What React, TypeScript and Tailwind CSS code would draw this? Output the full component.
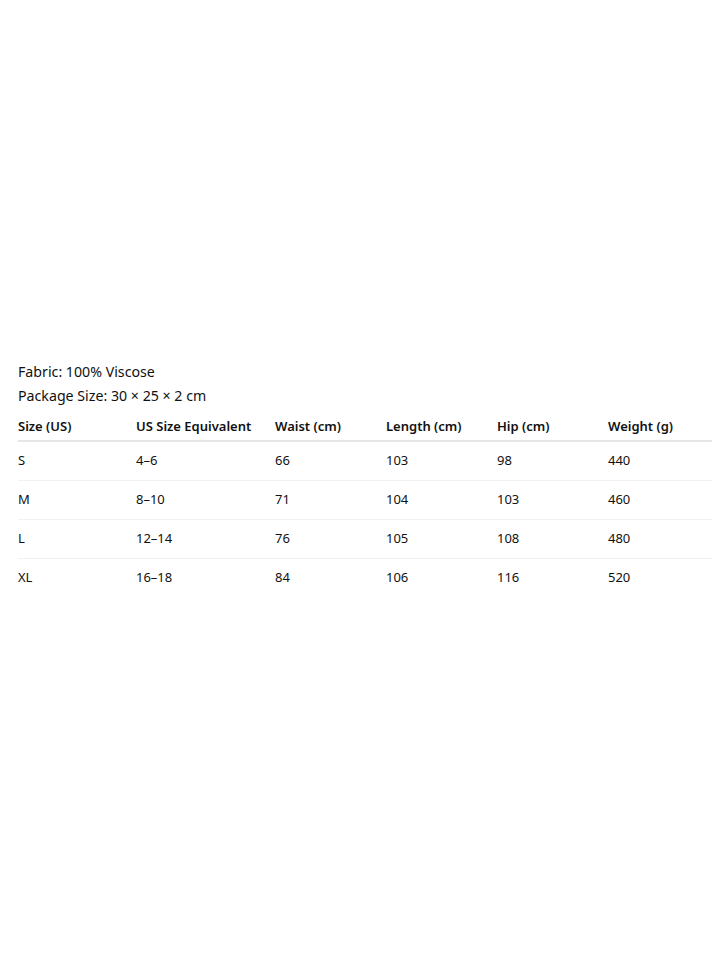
import React from "react";

const rows = [
  ["S", "4–6", "66", "103", "98", "440"],
  ["M", "8–10", "71", "104", "103", "460"],
  ["L", "12–14", "76", "105", "108", "480"],
  ["XL", "16–18", "84", "106", "116", "520"],
];
const heads = ["Size (US)", "US Size Equivalent", "Waist (cm)", "Length (cm)", "Hip (cm)", "Weight (g)"];
const widths = ["w-[118px]", "w-[139px]", "w-[111px]", "w-[111px]", "w-[111px]", "w-[104px]"];

export default function App() {
  return (
    <div className="min-h-screen bg-white text-[#111] pt-[360px] pl-[18px]" style={{ fontFamily: '"Noto Sans", "Open Sans", sans-serif' }}>
      <div className="text-[14.2px] leading-[24px]">Fabric: 100% Viscose</div>
      <div className="text-[14.2px] leading-[24px]">Package Size: 30 × 25 × 2 cm</div>
      <table className="w-[694px] border-collapse text-[13px] table-fixed">
        <thead>
          <tr className="border-b-2 border-[#e6e6e6]">
            {heads.map((h, i) => (
              <th key={h} className={`${widths[i]} text-left font-semibold leading-[24px] pt-[6px] pb-[2px] px-0 align-middle`}>{h}</th>
            ))}
          </tr>
        </thead>
        <tbody>
          {rows.map((r, ri) => (
            <tr key={ri} className={ri < rows.length - 1 ? "border-b border-[#f2f2f2]" : ""}>
              {r.map((c, ci) => (
                <td key={ci} className="h-[39px] p-0 align-middle">{c}</td>
              ))}
            </tr>
          ))}
        </tbody>
      </table>
    </div>
  );
}
